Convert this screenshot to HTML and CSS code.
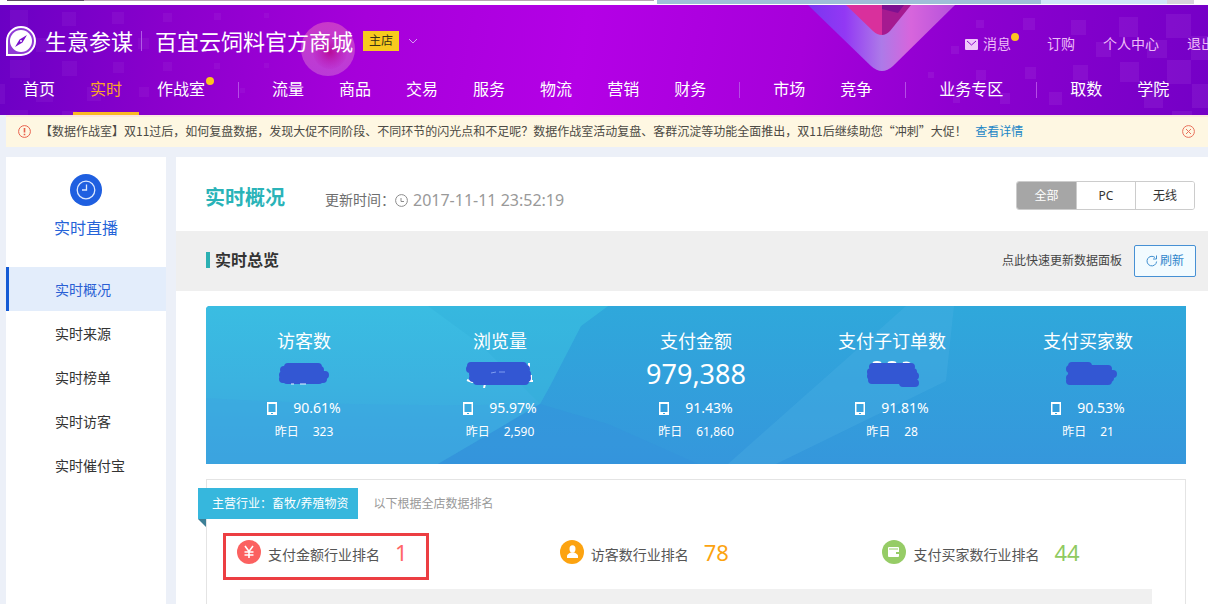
FILE: index.html
```html
<!DOCTYPE html>
<html lang="zh-CN">
<head>
<meta charset="utf-8">
<title>生意参谋 - 实时概况</title>
<link rel="stylesheet" href="styles.css">
</head>
<body>
<div class="strip"></div>
<header class="header">
  <svg class="decor decor-left" width="440" height="110" viewBox="0 5 440 110" aria-hidden="true">
    <defs>
      <linearGradient id="ball" x1="0" y1="0" x2="0" y2="1"><stop offset="0" stop-color="#d64bc4" stop-opacity=".75"/><stop offset="1" stop-color="#cf6ad6" stop-opacity=".55"/></linearGradient>
      <radialGradient id="ballcore"><stop offset="0" stop-color="#b80a98"/><stop offset="1" stop-color="#b616b8" stop-opacity=".1"/></radialGradient>
    </defs>
    <g fill="#b65be6" fill-opacity=".11">
      <path d="M10 10h18v18H10zM62 12h14v14H62zM112 12h12v12h-12zM163 13h9v9h-9zM214 13h7v7h-7zM264 13h5v5h-5z"/>
      <path d="M36 38h14v14H36zM87 38h12v12H87zM138 38h11v11h-11zM188 38h9v9h-9z"/>
      <path d="M10 60h20v18H10zM62 61h15v15H62zM113 62h11v11h-11zM163 62h9v9h-9zM214 63h6v6h-6zM264 63h5v5h-5z"/>
      <path d="M0 84h5v20H0zM36 86h17v16H36zM87 87h14v14H87zM139 87h10v10h-10zM189 88h8v8h-8zM240 88h5v5h-5zM10 110h18v5H10zM62 111h15v4H62z"/>
    </g>
    <circle cx="328" cy="49" r="27" fill="url(#ball)"/>
    <circle cx="330" cy="52" r="17" fill="url(#ballcore)"/>
  </svg>
  <svg class="decor decor-right" width="408" height="110" viewBox="800 5 408 110" aria-hidden="true">
    <defs>
      <linearGradient id="vee" x1="0" x2="1"><stop offset="0" stop-color="#7a35f0"/><stop offset=".25" stop-color="#9238f4"/><stop offset=".5" stop-color="#ad7ae8"/><stop offset=".7" stop-color="#d765dc"/><stop offset="1" stop-color="#b452dc"/></linearGradient>
    </defs>
    <g fill="#b65be6" fill-opacity=".15">
      <path d="M1166 14h25v24h-25zM1119 17h19v20h-19zM1071 20h15v15h-15zM1023 18h12v12h-12zM976 20h8v8h-8z"/>
      <path d="M1191 36h17v24h-17zM1096 42h15v15h-15zM1147 40h20v18h-20zM951 46h8v8h-8z"/>
      <path d="M1167 60h24v24h-24zM1120 62h19v20h-19zM1073 65h15v15h-15zM1025 67h11v12h-11zM976 70h10v10h-10zM928 72h6v6h-6z"/>
      <path d="M1192 84h16v24h-16zM1144 90h19v18h-19zM1049 92h13v13h-13zM1000 93h10v11h-10zM953 96h7v7h-7zM1172 111h20v4h-20z"/>
    </g>
    <path d="M808 5h147L893 66q-11 10-22 0z" fill="url(#vee)"/>
    <path d="M846 5h36v30q-5 0-9-4z" fill="#d9309c"/>
    <path d="M882 5h29L890 31q-4 4-8 4z" fill="#a51a90"/>
    <path d="M882 5h22l-6 8-16-4z" fill="#7d1090"/>
  </svg>

  <div class="topbar">
    <svg class="logo" width="30" height="30" viewBox="0 0 30 30" aria-hidden="true">
      <path d="M1 29V15a14 14 0 1 1 14 14z" fill="#8f3ad6" stroke="#fff" stroke-width="2"/>
      <circle cx="15" cy="15" r="11" fill="#fff"/>
      <path d="M21 9l-4.500 7.500L9 21l4.500-7.500z" fill="#7a12cc"/><circle cx="15" cy="15" r="1" fill="#fff"/>
    </svg>
    <span class="brand">生意参谋</span>
    <span class="brand-line"></span>
    <span class="store">百宜云饲料官方商城</span>
    <span class="tag">主店</span>
    <svg class="chevron" width="10" height="6" viewBox="0 0 10 6" fill="none" stroke="#d79bf2" aria-hidden="true"><path d="M1 1l4 4 4-4"/></svg>
    <nav class="utils">
      <a class="message" href="#"><svg width="13" height="11" viewBox="0 0 13 11" aria-hidden="true"><rect width="13" height="11" rx="1" fill="#f0c8fa"/><path d="M2 2l4.500 4L11 2" fill="none" stroke="#8d08cf"/></svg>消息<i class="dot"></i></a>
      <a href="#">订购</a>
      <a href="#">个人中心</a>
      <a href="#">退出</a>
    </nav>
  </div>
  <nav class="nav">
    <a href="#">首页</a>
    <a class="on" href="#">实时</a>
    <a href="#">作战室<i class="dot"></i></a>
    <span class="sep"></span>
    <a href="#">流量</a>
    <a href="#">商品</a>
    <a href="#">交易</a>
    <a href="#">服务</a>
    <a href="#">物流</a>
    <a href="#">营销</a>
    <a href="#">财务</a>
    <span class="sep"></span>
    <a href="#">市场</a>
    <a href="#">竞争</a>
    <span class="sep"></span>
    <a href="#">业务专区</a>
    <span class="sep"></span>
    <a href="#">取数</a>
    <a href="#">学院</a>
  </nav>
</header>

<div class="notice">
  <svg width="13" height="13" viewBox="0 0 13 13" fill="none" stroke="#e8604c" aria-hidden="true"><circle cx="6.500" cy="6.500" r="5.900"/><path d="M6.500 3v4.500M6.500 8.700v1.500" stroke-width="1.600"/></svg>
  <p>【数据作战室】双11过后，如何复盘数据，发现大促不同阶段、不同环节的闪光点和不足呢？数据作战室活动复盘、客群沉淀等功能全面推出，双11后继续助您“冲刺”大促！ <a href="#">查看详情</a></p>
  <button class="close" type="button" aria-label="关闭"><svg width="13" height="13" viewBox="0 0 13 13" fill="none" stroke="#e8705c"><circle cx="6.500" cy="6.500" r="5.900"/><path d="M4 4l5 5M9 4l-5 5"/></svg></button>
</div>

<div class="layout">
  <aside class="side">
    <div class="side-head">
      <svg width="32" height="32" viewBox="0 0 32 32" fill="none" aria-hidden="true"><circle cx="16" cy="16" r="16" fill="#1f5fe0"/><circle cx="16" cy="16" r="8.800" stroke="#dce8ff" stroke-width="1.300"/><path d="M16.500 10.500V16H12" stroke="#dce8ff" stroke-width="1.300"/></svg>
      <span>实时直播</span>
    </div>
    <a class="on" href="#">实时概况</a>
    <a href="#">实时来源</a>
    <a href="#">实时榜单</a>
    <a href="#">实时访客</a>
    <a href="#">实时催付宝</a>
  </aside>

  <main class="main">
    <div class="page-head">
      <h1>实时概况</h1>
      <p class="updated">更新时间：<svg width="13" height="13" viewBox="0 0 13 13" fill="none" stroke="#8c8c8c" aria-hidden="true"><circle cx="6.500" cy="6.500" r="5.900"/><path d="M6 4v3.500h3"/></svg><time>2017-11-11 23:52:19</time></p>
      <div class="segment">
        <button class="on" type="button">全部</button><button type="button">PC</button><button type="button">无线</button>
      </div>
    </div>

    <div class="section-head">
      <h2>实时总览</h2>
      <span class="hint">点此快速更新数据面板</span>
      <button class="refresh" type="button"><svg width="12" height="12" viewBox="0 0 12 12" fill="none" stroke="#3f8fd0" aria-hidden="true"><path d="M10.600 6.500A4.800 4.800 0 1 1 9 2.500M10.500.5v3.500H7"/></svg>刷新</button>
    </div>

    <section class="stats">
      <svg class="facets" viewBox="0 0 980 158" preserveAspectRatio="none" aria-hidden="true">
        <defs>
          <linearGradient id="cyan" x1="0" y1="0" x2="0" y2="1"><stop offset="0" stop-color="#3abde2"/><stop offset=".5" stop-color="#3bb2e0"/><stop offset="1" stop-color="#3ba2de"/></linearGradient>
        </defs>
        <path d="M0 0h402L375 20 344 80 334 98 232 158H0z" fill="url(#cyan)"/>
        <path d="M0 92q170 10 334 6L232 158H0z" fill="#3ba4e0" fill-opacity=".4"/>
        <path d="M222 0h180L375 20 344 80l-10 18-60-60z" fill="#2eabd6" fill-opacity=".3"/>
        <path d="M334 98L232 158h260l-90-40z" fill="#3492dc" fill-opacity=".4"/>
        <path d="M700 0h48l-8 75-170 83h-48L655 40z" fill="#4fb4e4" fill-opacity=".3"/>
      </svg>
      <div class="stat">
        <h3>访客数</h3>
        <div class="value"><svg width="54" height="24" viewBox="0 0 54 24" aria-label="已遮盖"><path d="M7 8h36M11 5h30M6 13h42M6 17h40M10 18h32" stroke="#3357d3" stroke-width="8" stroke-linecap="round"/><path d="M14 22h3M23 22h6" stroke="#e6f4ff"/></svg></div>
        <div class="line"><svg width="10" height="13" viewBox="0 0 10 13" aria-hidden="true"><path d="M0 0h10v13H0zM1.500 2v8h7V2z" fill="#fff" fill-rule="evenodd"/><path d="M4 11.500h2" stroke="#35a6df"/></svg><span>90.61%</span></div>
        <div class="past"><span>昨日</span><span>323</span></div>
      </div>
      <div class="stat">
        <h3>浏览量</h3>
        <div class="value"><svg width="70" height="28" viewBox="0 0 70 28" aria-label="已遮盖"><path d="M2 20l5 2 4-2M20 24l-1 4M64 3v6M61 21h7M66 15v6" stroke="#fff" stroke-width="2" fill="none"/><path d="M6 6h52M5 9h56M8 14h54M8 18h54M12 21h48" stroke="#3357d3" stroke-width="8" stroke-linecap="round"/><path d="M26 13l5-1M34 12h6" stroke="#7e9df0"/></svg></div>
        <div class="line"><svg width="10" height="13" viewBox="0 0 10 13" aria-hidden="true"><path d="M0 0h10v13H0zM1.500 2v8h7V2z" fill="#fff" fill-rule="evenodd"/><path d="M4 11.500h2" stroke="#35a6df"/></svg><span>95.97%</span></div>
        <div class="past"><span>昨日</span><span>2,590</span></div>
      </div>
      <div class="stat">
        <h3>支付金额</h3>
        <div class="value">979,388</div>
        <div class="line"><svg width="10" height="13" viewBox="0 0 10 13" aria-hidden="true"><path d="M0 0h10v13H0zM1.500 2v8h7V2z" fill="#fff" fill-rule="evenodd"/><path d="M4 11.500h2" stroke="#35a6df"/></svg><span>91.43%</span></div>
        <div class="past"><span>昨日</span><span>61,860</span></div>
      </div>
      <div class="stat">
        <h3>支付子订单数</h3>
        <div class="value"><svg width="54" height="28" viewBox="0 0 54 28" aria-label="已遮盖"><path d="M8 3q4-2 8 0M23 3q4-2 8 0M38 3q6-2 9 3" stroke="#fff" stroke-width="2" fill="none"/><path d="M8 7h38M6 12h42M6 16h44M7 20h41M38 23h12" stroke="#3357d3" stroke-width="8" stroke-linecap="round"/></svg></div>
        <div class="line"><svg width="10" height="13" viewBox="0 0 10 13" aria-hidden="true"><path d="M0 0h10v13H0zM1.500 2v8h7V2z" fill="#fff" fill-rule="evenodd"/><path d="M4 11.500h2" stroke="#35a6df"/></svg><span>91.81%</span></div>
        <div class="past"><span>昨日</span><span>28</span></div>
      </div>
      <div class="stat">
        <h3>支付买家数</h3>
        <div class="value"><svg width="60" height="24" viewBox="0 0 60 24" aria-label="已遮盖"><path d="M14 4h16M12 7h38M14 12h41M12 16h40M12 19h38" stroke="#3357d3" stroke-width="8" stroke-linecap="round"/></svg></div>
        <div class="line"><svg width="10" height="13" viewBox="0 0 10 13" aria-hidden="true"><path d="M0 0h10v13H0zM1.500 2v8h7V2z" fill="#fff" fill-rule="evenodd"/><path d="M4 11.500h2" stroke="#35a6df"/></svg><span>90.53%</span></div>
        <div class="past"><span>昨日</span><span>21</span></div>
      </div>
    </section>

    <section class="panel">
      <div class="panel-head">
        <span class="ribbon">主营行业：畜牧/养殖物资</span>
        <span class="panel-note">以下根据全店数据排名</span>
      </div>
      <div class="ranks">
        <div class="rank marked">
          <svg width="24" height="24" viewBox="0 0 24 24" fill="none" aria-hidden="true"><circle cx="12" cy="12" r="12" fill="#fb6160"/><path d="M8 6l4 5.500L16 6M12 11.500V18M7.500 12h9M7.500 15h9" stroke="#fff" stroke-width="1.600"/></svg>
          <span>支付金额行业排名</span><b class="red">1</b>
        </div>
        <div class="rank">
          <svg width="24" height="24" viewBox="0 0 24 24" aria-hidden="true"><circle cx="12" cy="12" r="12" fill="#fca310"/><ellipse cx="12.500" cy="9" rx="3" ry="3.700" fill="#fff"/><path d="M7 18v-2q0-2 4-3.500h3q4 1.500 4 3.500v2z" fill="#fff"/></svg>
          <span>访客数行业排名</span><b class="orange">78</b>
        </div>
        <div class="rank">
          <svg width="24" height="24" viewBox="0 0 24 24" aria-hidden="true"><circle cx="12" cy="12" r="12" fill="#96cc66"/><rect x="6" y="7" width="11" height="10" rx="1" fill="#fff"/><path d="M7 9h9" stroke="#96cc66"/><path d="M14 12h3v2h-3z" fill="#96cc66"/></svg>
          <span>支付买家数行业排名</span><b class="green">44</b>
        </div>
      </div>
      <div class="chart"></div>
    </section>
  </main>
</div>
</body>
</html>
```

FILE: styles.css
```css
* { box-sizing: border-box; }

body {
  display: flex;
  flex-direction: column;
  height: 100vh;
  margin: 0;
  overflow: hidden;
  background: #ecf0f8;
  color: #333;
  font: 12px/20px "Noto Sans", "Noto Sans CJK SC", sans-serif;
}

h1, h2, h3, p { margin: 0; }
a { color: inherit; text-decoration: none; }
button { padding: 0; font: inherit; cursor: pointer; }
svg { flex: none; }

.strip {
  flex: none;
  height: 5px;
  background:
    linear-gradient(90deg, transparent 7px, #5b4a63 7px 84px, #b7a3b4 84px 654px, transparent 654px) 0 0 / 100% 1px no-repeat,
    linear-gradient(90deg, transparent 657px, #9fbfd8 657px 1041px, #cfe6f8 1041px 1167px, #d8d4dc 1167px 1194px, transparent 1194px) 0 0 / 100% 4px no-repeat,
    #fff;
}

/* header */
.header {
  position: relative;
  flex: none;
  overflow: hidden;
  background: linear-gradient(100deg, #6a00c4 0%, #8a00cc 14%, #a600da 30%, #b400e6 48%, #a600da 66%, #8c00cf 80%, #7400c6 100%);
}
.decor { position: absolute; top: 0; }
.decor-left { left: 0; }
.decor-right { right: 0; }

.topbar {
  position: relative;
  display: flex;
  align-items: center;
  height: 60px;
  padding: 12px 0 0 6px;
  color: #fff;
  white-space: nowrap;
}
.brand, .store { font-size: 22px; line-height: 28px; }
.brand { margin-left: 9px; }
.brand-line { width: 1px; height: 20px; margin: 0 13px 0 8px; background: #b15be6; }
.tag {
  margin: 0 9px 0 10px;
  padding: 0 6px;
  background: #f7ca1e;
  color: #3a3218;
}
.utils {
  display: flex;
  gap: 28px;
  margin: 6px -7px 0 auto;
  color: #eebcf8;
  font-size: 14px;
}
.message { position: relative; display: flex; align-items: center; gap: 5px; margin-right: 8px; }
.dot {
  position: absolute;
  width: 8px;
  height: 8px;
  border-radius: 50%;
  background: #fcc51e;
}
.message .dot { top: -1px; right: -8px; }

.nav {
  position: relative;
  display: flex;
  align-items: center;
  gap: 1px;
  height: 50px;
  padding-left: 6px;
  color: #fff;
  font-size: 16px;
  line-height: 45px;
  white-space: nowrap;
}
.nav a { position: relative; padding: 2px 17px 0; border-bottom: 3px solid transparent; }
.nav .on { border-color: #fbb924; color: #fba628; }
.nav .dot { top: 12px; right: 8px; }
.sep { width: 1px; height: 16px; margin: 0 15px; background: #b64ce6; }

/* notice bar */
.notice {
  display: flex;
  flex: none;
  align-items: center;
  height: 32px;
  margin-left: 6px;
  padding: 0 13px 2px 12px;
  border-top: 2px solid #fde6e0;
  background: #fef7e2;
  color: #4c4a44;
  font-family: "Noto Sans CJK SC", sans-serif;
  white-space: nowrap;
}
.notice p { margin: 0 auto 0 9px; }
.notice a { margin-left: 6px; color: #1c86c6; }
.close { display: flex; border: 0; background: none; }

/* columns */
.layout { display: flex; flex: 1; gap: 10px; padding: 10px 0 0 6px; }

.side { flex: none; width: 160px; background: #fff; font-size: 14px; }
.side-head {
  display: flex;
  flex-direction: column;
  align-items: center;
  gap: 10px;
  height: 110px;
  padding-top: 17px;
  color: #2563d8;
  font-size: 16px;
  line-height: 24px;
}
.side a {
  display: block;
  padding: 2px 0 0 46px;
  border-left: 3px solid transparent;
  line-height: 42px;
}
.side .on { border-color: #155bd5; background: #e3edfb; color: #2a5fd4; }

.main { display: flex; flex: 1; flex-direction: column; min-width: 0; background: #fff; }

.page-head { display: flex; align-items: center; height: 74px; padding: 0 13px 0 29px; }
.page-head h1 { margin-top: 8px; color: #2ab3b8; font-size: 20px; line-height: 28px; }
.updated {
  display: flex;
  align-items: center;
  margin: 12px auto 0 40px;
  color: #6e6e6e;
  font-size: 14px;
}
.updated time { margin-left: 5px; color: #999; font-size: 16px; }

.segment { display: flex; border: 1px solid #ccc; border-radius: 3px; margin-top: 3px; overflow: hidden; }
.segment button {
  width: 59px;
  height: 27px;
  border: 0;
  border-left: 1px solid #ccc;
  background: #fff;
  color: #333;
}
.segment .on { border-left: 0; background: #a6a6a6; color: #fff; }

.section-head {
  display: flex;
  align-items: center;
  height: 60px;
  padding: 0 12px 0 30px;
  background: #efefef;
}
.section-head h2 {
  margin: 0 auto 2px 0;
  padding-left: 5px;
  border-left: 4px solid #2bb0b2;
  font-size: 16px;
  line-height: 16px;
}
.hint { color: #444; }
.refresh {
  display: flex;
  align-items: center;
  justify-content: center;
  gap: 2px;
  width: 62px;
  height: 32px;
  margin-left: 12px;
  border: 1px solid #4690d4;
  border-radius: 2px;
  background: #f2fbff;
  color: #2f86cc;
}

/* totals */
.stats {
  position: relative;
  display: grid;
  grid-template-columns: repeat(5, 1fr);
  margin: 15px 22px 0 30px;
  overflow: hidden;
  border-radius: 4px 0 0 0;
  background: linear-gradient(#2fa8db, #3597dc);
  color: #fff;
}
.facets { position: absolute; width: 100%; height: 100%; }
.stat {
  position: relative;
  display: flex;
  flex-direction: column;
  align-items: center;
  padding: 21px 0 20px;
}
.stat h3 { font-size: 18px; font-weight: 400; line-height: 28px; }
.value {
  display: flex;
  align-items: center;
  height: 37px;
  margin-bottom: 4px;
  font-size: 27px;
}
.line { display: flex; align-items: center; gap: 16px; height: 24px; font-size: 14px; }
.past { display: flex; align-items: center; gap: 14px; height: 24px; }

/* ranking */
.panel {
  flex: 1;
  display: flex;
  flex-direction: column;
  margin: 15px 22px 0 30px;
  border: 1px solid #e4e4e4;
  border-bottom: 0;
}
.panel-head { display: flex; align-items: center; gap: 15px; margin: 8px 0 0 -9px; color: #999; }
.ribbon {
  position: relative;
  padding: 6px 10px 5px 14px;
  background: #36b7dd;
  color: #fff;
}
.ribbon::after {
  content: "";
  position: absolute;
  top: 100%;
  left: 0;
  border-top: 8px solid #3c7f96;
  border-left: 8px solid transparent;
}
.ranks { display: grid; grid-template-columns: repeat(3, 33%); margin-top: 14px; }
.rank {
  display: flex;
  align-items: center;
  justify-self: start;
  height: 47px;
  margin-left: 16px;
  padding: 0 18px 9px 11px;
  border: 3px solid transparent;
  color: #555;
  font-size: 14px;
}
.marked { border-color: #ec3e42; }
.rank span { margin: 6px 15px 0 7px; }
.rank b { font-size: 22px; font-weight: 400; }
.red { color: #f66; }
.orange { color: #fca310; }
.green { color: #8fca60; }
.chart { flex: 1; margin: 9px 33px 0; background: #f0f0f0; }
```
